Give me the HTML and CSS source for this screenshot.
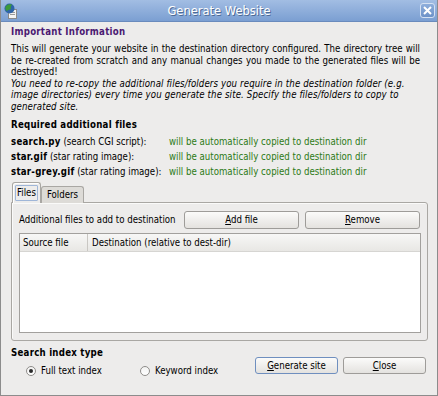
FILE: index.html
```html
<!DOCTYPE html>
<html lang="en">
<head>
    <meta charset="UTF-8">
    <title>Generate Website</title>
    <link rel="stylesheet" href="styles.css">
</head>
<body>
    <div class="window">
        <div class="titlebar">
            <svg class="app-icon" width="14" height="16" viewBox="0 0 14 16">
                <rect x="4.5" y="6.5" width="8" height="9" fill="#f4f4f4" stroke="#8a8a8a"/>
                <rect x="6" y="9" width="5" height="1" fill="#9a9a9a"/>
                <rect x="6" y="11" width="5" height="1" fill="#9a9a9a"/>
                <circle cx="5.5" cy="5.5" r="5" fill="#2f64a8"/>
                <path d="M1.5 3.5 Q4 0.5 8 1.5 Q6 4 7 6 Q4 7 2.5 8 Q0.8 6 1.5 3.5Z" fill="#3c9a3a"/>
            </svg>
            <div class="title">Generate Website</div>
            <div class="close-btn">
                <svg width="9" height="9" viewBox="0 0 9 9">
                    <path d="M1 1 L8 8 M8 1 L1 8" stroke="#fff" stroke-width="2"/>
                </svg>
            </div>
        </div>
        <div class="content">
            <div class="heading important">Important Information</div>
            <div class="info">
                <div class="info-main">
                    <span class="line">This will generate your website in the destination directory configured. The directory tree will</span>
                    <span class="line">be re-created from scratch and any manual changes you made to the generated files will be</span>
                    <span class="line last">destroyed!</span>
                </div>
                <div class="info-note">You need to re-copy the additional files/folders you require in the destination folder (e.g. image directories) every time you generate the site. Specify the files/folders to copy to generated site.</div>
            </div>
            <div class="heading required">Required additional files</div>
            <div class="req-grid">
                <div><b>search.py</b> (search CGI script):</div>
                <div class="green">will be automatically copied to destination dir</div>
                <div><b>star.gif</b> (star rating image):</div>
                <div class="green">will be automatically copied to destination dir</div>
                <div><b>star-grey.gif</b> (star rating image):</div>
                <div class="green">will be automatically copied to destination dir</div>
            </div>

            <div class="tabs">
                <div class="tab active"><span class="focus">Files</span></div>
                <div class="tab">Folders</div>
            </div>
            <div class="tab-panel">
                <div class="toolbar">
                    <span class="toolbar-label">Additional files to add to destination</span>
                    <button class="btn wide"><u>A</u>dd file</button>
                    <button class="btn wide"><u>R</u>emove</button>
                </div>
                <div class="list">
                    <div class="list-head">
                        <div class="col-source">Source file</div>
                        <div class="col-dest">Destination (relative to dest-dir)</div>
                    </div>
                </div>
            </div>

            <div class="bottom">
                <div class="search-type">
                    <div class="heading">Search index type</div>
                    <div class="radios">
                        <label class="radio"><span class="dot checked"></span>Full text index</label>
                        <label class="radio"><span class="dot"></span>Keyword index</label>
                    </div>
                </div>
                <div class="actions">
                    <button class="btn action focused"><u>G</u>enerate site</button>
                    <button class="btn action"><u>C</u>lose</button>
                </div>
            </div>
        </div>
    </div>
</body>
</html>
```

FILE: styles.css
```css
body {
    margin: 0;
    font-family: "DejaVu Sans", Verdana, sans-serif;
    font-stretch: condensed;
    font-size: 9.6px;
    color: #000;
    background-color: #edeceb;
}
b {
    letter-spacing: 0.25px;
}
.window {
    width: 438px;
    height: 396px;
    box-sizing: border-box;
    border: 1px solid #8c8c8c;
    border-top: none;
    background-color: #edeceb;
    overflow: hidden;
}
.titlebar {
    display: flex;
    align-items: center;
    height: 22px;
    margin: 0 -1px;
    padding: 0 3px 0 4px;
    background: linear-gradient(#a2bde3, #7b9fd2);
    border-bottom: 1px solid #6a8bbd;
    box-sizing: border-box;
}
.app-icon {
    display: block;
}
.title {
    flex: 1;
    text-align: center;
    color: #fff;
    font-size: 11.5px;
    font-stretch: normal;
    text-shadow: 1px 1px 0 #4d6a95;
}
.close-btn {
    width: 13px;
    height: 13px;
    border: 1px solid #d5e1f2;
    border-radius: 3px;
    background: linear-gradient(#8eaedb, #6d92c8);
    display: flex;
    align-items: center;
    justify-content: center;
}
.close-btn svg {
    display: block;
}
.content {
    padding: 3px 10px 0 10px;
}
.heading {
    font-weight: bold;
    letter-spacing: 0.25px;
    line-height: 13px;
}
.important {
    color: #4b1a72;
}
.info {
    margin: 5px 7px 5px 0;
    line-height: 11.6px;
}
.line {
    display: block;
    white-space: nowrap;
    text-align: justify;
    text-align-last: justify;
}
.line.last {
    text-align-last: left;
}
.info-note {
    font-style: italic;
    letter-spacing: 0.12px;
}
.required {
    margin-bottom: 3px;
}
.req-grid {
    display: grid;
    grid-template-columns: 158px auto;
    line-height: 15px;
}
.green {
    color: #2c7a16;
}

/* tabs */
.tabs {
    display: flex;
    align-items: flex-end;
    height: 20px;
    margin-top: 4px;
    padding-left: 1px;
    position: relative;
    z-index: 1;
}
.tab {
    height: 17px;
    line-height: 16px;
    padding: 0 5px;
    border: 1px solid #a9a7a3;
    border-bottom: none;
    border-radius: 3px 3px 0 0;
    background-color: #dddbd7;
    box-sizing: border-box;
}
.tab.active {
    height: 21px;
    padding: 2px 2px 0 2px;
    background-color: #edeceb;
    box-shadow: inset 1px 1px 0 #fff;
    line-height: 14px;
}
.focus {
    display: inline-block;
    padding: 0 1px;
    border: 1px solid #9fb6d8;
    border-radius: 1px;
}
.tab-panel {
    margin-top: -1px;
    width: 417px;
    height: 139px;
    box-sizing: border-box;
    border: 1px solid #a9a7a3;
    border-radius: 0 3px 3px 3px;
    padding: 8px 7px 0 7px;
    box-shadow: inset 1px 1px 0 #fafaf9;
}
.toolbar {
    display: flex;
    align-items: center;
    gap: 6px;
}
.toolbar-label {
    width: 159px;
}
.btn {
    font-family: inherit;
    font-stretch: condensed;
    font-size: 9.6px;
    color: #000;
    height: 18px;
    padding: 0;
    border: 1px solid #9e9c99;
    border-radius: 3px;
    background: linear-gradient(#fbfbfa, #e4e2df);
}
.btn.wide {
    width: 115px;
}
.list {
    margin-top: 4px;
    width: 402px;
    height: 100px;
    box-sizing: border-box;
    border: 1px solid #a2a09d;
    background-color: #fff;
}
.list-head {
    display: flex;
    height: 18px;
    line-height: 17px;
    border-bottom: 1px solid #d6d5d2;
    background: linear-gradient(#f7f7f6, #e8e7e4);
    box-sizing: border-box;
}
.col-source {
    width: 64px;
    padding-left: 3px;
    border-right: 1px solid #c9c7c3;
}
.col-dest {
    padding-left: 4px;
}

/* bottom area */
.bottom {
    display: flex;
    justify-content: space-between;
    margin-top: 5px;
    padding-right: 1px;
}
.radios {
    display: flex;
    margin-top: 6px;
    padding-left: 15px;
    line-height: 12px;
}
.radio {
    display: flex;
    align-items: center;
    width: 114px;
}
.dot {
    width: 10px;
    height: 10px;
    box-sizing: border-box;
    border: 1px solid #8f8d8a;
    border-radius: 50%;
    background: linear-gradient(#f2f2f1, #fff);
    margin-right: 5px;
    position: relative;
}
.dot.checked::after {
    content: "";
    position: absolute;
    left: 2px;
    top: 2px;
    width: 4px;
    height: 4px;
    border-radius: 50%;
    background-color: #2a2a2a;
}
.actions {
    display: flex;
    gap: 5px;
    padding-top: 11px;
}
.btn.action {
    width: 83px;
    height: 17px;
}
.btn.focused {
    border-color: #6f8fbf;
}
```
